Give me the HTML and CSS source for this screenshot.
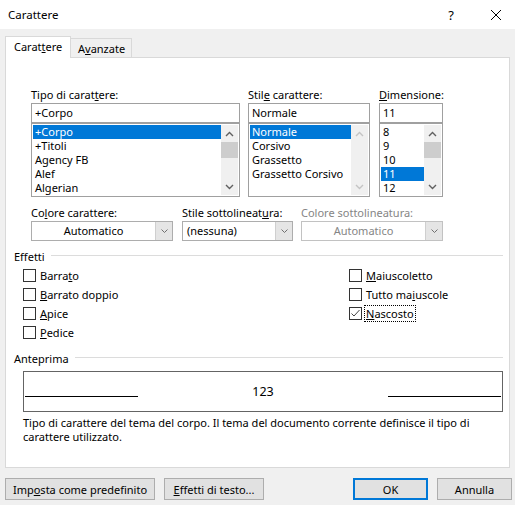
FILE: index.html
```html
<!DOCTYPE html>
<html lang="it">
<head>
  <meta charset="UTF-8" />
  <title>Carattere</title>
  <link rel="stylesheet" href="styles.css">
</head>
<body>

<div class="titlebar">
  <span class="title">Carattere</span>
  <span class="help">?</span>
  <span class="close">
    <svg width="12" height="12" viewBox="0 0 12 12"><path d="M1 1 L11 11 M11 1 L1 11" stroke="#000" stroke-width="1" fill="none"/></svg>
  </span>
</div>

<div class="dialog">
  <div class="tabs">
    <div class="tab active">Carat<u>t</u>ere</div>
    <div class="tab">A<u>v</u>anzate</div>
  </div>

  <div class="panel">
    <!-- font / style / size -->
    <div class="font-row">
      <div class="field f-name">
        <label>Tipo di carat<u>t</u>ere:</label>
        <div class="textbox">+Corpo</div>
        <div class="listbox">
          <ul>
            <li class="sel">+Corpo</li>
            <li>+Titoli</li>
            <li>Agency FB</li>
            <li>Alef</li>
            <li>Algerian</li>
          </ul>
          <div class="vscroll">
            <div class="arrow"><svg width="9" height="6" viewBox="0 0 9 6"><path d="M1 5 L4.5 1.5 L8 5" fill="none" stroke="#606060" stroke-width="1.4"/></svg></div>
            <div class="thumb"></div>
            <div class="track"></div>
            <div class="arrow"><svg width="9" height="6" viewBox="0 0 9 6"><path d="M1 1 L4.5 4.5 L8 1" fill="none" stroke="#606060" stroke-width="1.4"/></svg></div>
          </div>
        </div>
      </div>

      <div class="field f-style">
        <label>Stil<u>e</u> carattere:</label>
        <div class="textbox">Normale</div>
        <div class="listbox">
          <ul>
            <li class="sel">Normale</li>
            <li>Corsivo</li>
            <li>Grassetto</li>
            <li>Grassetto Corsivo</li>
          </ul>
          <div class="vscroll disabled">
            <div class="arrow"><svg width="9" height="6" viewBox="0 0 9 6"><path d="M1 5 L4.5 1.5 L8 5" fill="none" stroke="#c4c4c4" stroke-width="1.4"/></svg></div>
            <div class="track"></div>
            <div class="arrow"><svg width="9" height="6" viewBox="0 0 9 6"><path d="M1 1 L4.5 4.5 L8 1" fill="none" stroke="#c4c4c4" stroke-width="1.4"/></svg></div>
          </div>
        </div>
      </div>

      <div class="field f-size">
        <label><u>D</u>imensione:</label>
        <div class="textbox">11</div>
        <div class="listbox">
          <ul>
            <li>8</li>
            <li>9</li>
            <li>10</li>
            <li class="sel">11</li>
            <li>12</li>
          </ul>
          <div class="vscroll">
            <div class="arrow"><svg width="9" height="6" viewBox="0 0 9 6"><path d="M1 5 L4.5 1.5 L8 5" fill="none" stroke="#606060" stroke-width="1.4"/></svg></div>
            <div class="thumb"></div>
            <div class="track"></div>
            <div class="arrow"><svg width="9" height="6" viewBox="0 0 9 6"><path d="M1 1 L4.5 4.5 L8 1" fill="none" stroke="#606060" stroke-width="1.4"/></svg></div>
          </div>
        </div>
      </div>
    </div>

    <!-- colour / underline -->
    <div class="combo-row">
      <div class="field c-color">
        <label>Co<u>l</u>ore carattere:</label>
        <div class="combo">
          <span class="value center">Automatico</span>
          <span class="drop"><svg width="9" height="6" viewBox="0 0 9 6"><path d="M1.5 1.5 L4.5 4.5 L7.5 1.5" fill="none" stroke="#707070" stroke-width="1"/></svg></span>
        </div>
      </div>
      <div class="field c-under">
        <label>Stile sottolineat<u>u</u>ra:</label>
        <div class="combo">
          <span class="value">(nessuna)</span>
          <span class="drop"><svg width="9" height="6" viewBox="0 0 9 6"><path d="M1.5 1.5 L4.5 4.5 L7.5 1.5" fill="none" stroke="#707070" stroke-width="1"/></svg></span>
        </div>
      </div>
      <div class="field c-ucolor disabled">
        <label>Colore sottolineatura:</label>
        <div class="combo">
          <span class="value center">Automatico</span>
          <span class="drop"><svg width="9" height="6" viewBox="0 0 9 6"><path d="M1.5 1.5 L4.5 4.5 L7.5 1.5" fill="none" stroke="#707070" stroke-width="1"/></svg></span>
        </div>
      </div>
    </div>

    <!-- effects -->
    <div class="group-head effects-head"><span>Effetti</span><i></i></div>
    <div class="effects">
      <div class="col left">
        <div class="check"><span class="box"></span>Barra<u>t</u>o</div>
        <div class="check"><span class="box"></span><u>B</u>arrato doppio</div>
        <div class="check"><span class="box"></span><u>A</u>pice</div>
        <div class="check"><span class="box"></span><u>P</u>edice</div>
      </div>
      <div class="col">
        <div class="check"><span class="box"></span><u>M</u>aiuscoletto</div>
        <div class="check"><span class="box"></span>Tutto ma<u>i</u>uscole</div>
        <div class="check">
          <span class="box checked"><svg width="11" height="11" viewBox="0 0 11 11"><path d="M1.5 5.5 L4 8 L9.5 2" fill="none" stroke="#444" stroke-width="1"/></svg></span>
          <span class="focus"><u>N</u>ascosto</span>
        </div>
      </div>
    </div>

    <!-- preview -->
    <div class="group-head preview-head"><span>Anteprima</span><i></i></div>
    <div class="preview">
      <span class="pline"></span>
      <span class="sample">123</span>
      <span class="pline"></span>
    </div>
    <p class="desc">Tipo di carattere del tema del corpo. Il tema del documento corrente definisce il tipo di<br>carattere utilizzato.</p>
  </div>

  <div class="buttons">
    <button>Imp<u>o</u>sta come predefinito</button>
    <button class="fx"><u>E</u>ffetti di testo...</button>
    <button class="ok">OK</button>
    <button class="cancel">Annulla</button>
  </div>
</div>

</body>
</html>
```

FILE: styles.css
```css
body {
  margin: 0;
  width: 515px;
  height: 505px;
  overflow: hidden;
  background: #f0f0f0;
  font-family: 'Noto Sans', 'Segoe UI', sans-serif;
  font-size: 11px;
  color: #000;
}

u {
  text-decoration: underline;
  text-underline-offset: 1px;
}

/* title bar */
.titlebar {
  height: 29px;
  background: #fff;
  display: flex;
  align-items: center;
  padding-left: 8px;
  padding-right: 4px;
}

.titlebar .title {
  flex: 1;
  font-size: 11.5px;
}

.titlebar .help {
  width: 30px;
  text-align: center;
  font-size: 13px;
  margin-right: 15px;
}

.titlebar .close {
  width: 30px;
  display: flex;
  justify-content: center;
}

/* tabs */
.dialog {
  padding: 0 5px;
}

.tabs {
  display: flex;
  align-items: flex-end;
  height: 28px;
}

.tab {
  box-sizing: border-box;
  height: 19px;
  line-height: 19px;
  border: 1px solid #d9d9d9;
  border-bottom: none;
  border-left: none;
  width: 61px;
  padding-left: 7px;
}

.tab.active {
  position: relative;
  z-index: 1;
  height: 22px;
  line-height: 20px;
  width: 66px;
  padding-left: 8px;
  background: #fff;
  border-left: 1px solid #d9d9d9;
  margin-bottom: -1px;
}

.panel {
  box-sizing: border-box;
  height: 411px;
  background: #fff;
  border: 1px solid #d9d9d9;
  padding: 29px 6px 0 8px;
}

/* fields */
.field label {
  display: block;
  height: 15px;
  line-height: 15px;
  margin-bottom: 1px;
  white-space: nowrap;
}

.font-row {
  display: flex;
  padding-left: 17px;
}

.f-name { width: 209px; }
.f-style { width: 122px; margin-left: 8px; }
.f-size { width: 64px; margin-left: 9px; }

.textbox {
  box-sizing: border-box;
  height: 20px;
  line-height: 18px;
  border: 1px solid #a0a0a0;
  padding-left: 3px;
}

.listbox {
  box-sizing: border-box;
  height: 74px;
  border: 1px solid #a0a0a0;
  padding: 1px;
  display: flex;
}

.listbox ul {
  flex: 1;
  margin: 0;
  padding: 0;
  list-style: none;
}

.listbox li {
  height: 14px;
  line-height: 14px;
  padding-left: 2px;
  white-space: nowrap;
}

.listbox li.sel {
  background: #0078d7;
  color: #fff;
}

.vscroll {
  width: 17px;
  background: #f0f0f0;
  display: flex;
  flex-direction: column;
}

.vscroll .arrow {
  height: 17px;
  display: flex;
  align-items: center;
  justify-content: center;
}

.vscroll .thumb {
  height: 16px;
  background: #cdcdcd;
}

.vscroll .track {
  flex: 1;
}

/* combos */
.combo-row {
  display: flex;
  padding-left: 17px;
  margin-top: 8px;
}

.c-color { width: 142px; }
.c-under { width: 111px; margin-left: 9px; }
.c-ucolor { width: 142px; margin-left: 8px; }

.combo {
  box-sizing: border-box;
  height: 20px;
  border: 1px solid #adadad;
  display: flex;
}

.combo .value {
  flex: 1;
  line-height: 18px;
  padding-left: 4px;
}

.combo .value.center {
  text-align: center;
  padding-left: 0;
}

.combo .drop {
  width: 16px;
  background: #e5e5e5;
  border-left: 1px solid #cfcfcf;
  display: flex;
  align-items: center;
  justify-content: center;
}

.disabled label,
.disabled .value {
  color: #858585;
}

.disabled .combo {
  border-color: #c2c2c2;
}

/* groups */
.group-head {
  display: flex;
  align-items: center;
  height: 15px;
  line-height: 15px;
}

.group-head i {
  flex: 1;
  height: 1px;
  background: #dcdcdc;
  margin-left: 6px;
  margin-top: -3px;
}

.effects-head {
  margin-top: 8px;
}

.effects {
  display: flex;
  padding-left: 9px;
  margin-top: 2px;
}

.effects .col {
  display: flex;
  flex-direction: column;
}

.effects .col.left {
  width: 326px;
}

.check {
  height: 19px;
  display: flex;
  align-items: center;
  white-space: nowrap;
}

.check .box {
  box-sizing: border-box;
  width: 13px;
  height: 13px;
  border: 1px solid #333;
  background: #fff;
  margin-right: 4px;
  display: flex;
  align-items: center;
  justify-content: center;
}

.check .box.checked {
  margin-right: 2px;
}

.focus {
  border: 1px dotted #000;
  padding: 0 1px;
  line-height: 15px;
}

/* preview */
.preview-head {
  margin-top: 9px;
}

.preview {
  box-sizing: border-box;
  height: 41px;
  margin: 5px 0 0 9px;
  border: 1px solid #646464;
  padding: 0 1px;
  display: flex;
  align-items: center;
  justify-content: space-between;
}

.pline {
  width: 113px;
  height: 1px;
  background: #000;
  margin-top: 10px;
}

.sample {
  font-size: 12.5px;
}

.desc {
  margin: 4px 0 0 9px;
  line-height: 14px;
}

/* bottom buttons */
.buttons {
  display: flex;
  margin-top: 10px;
  margin-right: -2px;
}

.buttons button {
  box-sizing: border-box;
  height: 22px;
  font-family: inherit;
  font-size: 11px;
  color: #000;
  background: #e1e1e1;
  border: 1px solid #adadad;
  padding: 0;
  width: 150px;
}

.buttons .fx {
  width: 100px;
  margin-left: 9px;
}

.buttons .ok {
  width: 75px;
  margin-left: auto;
  border: 2px solid #0078d7;
}

.buttons .cancel {
  width: 75px;
  margin-left: 9px;
}
```
